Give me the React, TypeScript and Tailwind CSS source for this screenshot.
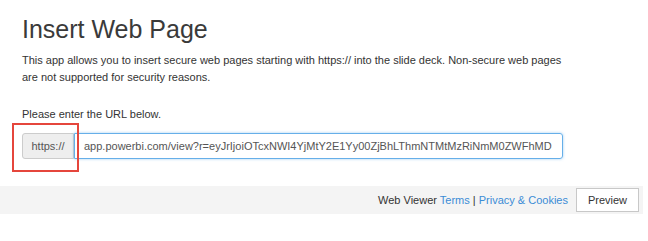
import React from 'react';

const App: React.FC = () => {
  return (
    <div className="w-[648px] h-[241px] bg-white overflow-hidden font-['Liberation_Sans',Arial,sans-serif] text-[#333]">
      {/* header + intro */}
      <div className="pl-[22px] pt-[14px]">
        <h1 className="text-[25px] leading-[30px] text-[#3a3a3a]">Insert Web Page</h1>
        <p className="mt-[8px] text-[11px] leading-[17px] text-[#333]">
          This app allows you to insert secure web pages starting with https:// into the slide deck. Non-secure web pages
          <br />
          are not supported for security reasons.
        </p>
        <p className="mt-[20px] text-[11px] leading-[17px] text-[#333]">Please enter the URL below.</p>
      </div>

      {/* url input */}
      <div className="relative mt-[10px] ml-[22px] flex h-[26px] w-[541px]">
        <div className="flex w-[52px] shrink-0 items-center justify-center rounded-l-[3px] border border-[#ccc] bg-[#eee] text-[11px] text-[#555]">
          https://
        </div>
        <div className="flex flex-1 items-center overflow-hidden whitespace-nowrap rounded-r-[3px] border border-[#66afe9] pl-[9px] text-[11px] text-[#555] shadow-[0_0_3px_rgba(102,175,233,0.6)]">
          app.powerbi.com/view?r=eyJrIjoiOTcxNWI4YjMtY2E1Yy00ZjBhLThmNTMtMzRiNmM0ZWFhMD
        </div>
        {/* highlight box */}
        <div className="absolute left-[-10px] top-[-10px] h-[49px] w-[67px] border-2 border-[#e5463c]" />
      </div>

      {/* footer */}
      <div className="mt-[27px] flex h-[28px] w-[643px] items-center justify-end bg-[#f4f4f4] pr-[4px]">
        <span className="text-[11px] text-[#333]">
          Web Viewer <span className="text-[#3b8cd6]">Terms</span> | <span className="text-[#3b8cd6]">Privacy &amp; Cookies</span>
        </span>
        <button className="ml-[8px] h-[24px] w-[63px] border border-[#c8c8c8] bg-white text-[11px] text-[#333]">
          Preview
        </button>
      </div>
    </div>
  );
};

export default App;
